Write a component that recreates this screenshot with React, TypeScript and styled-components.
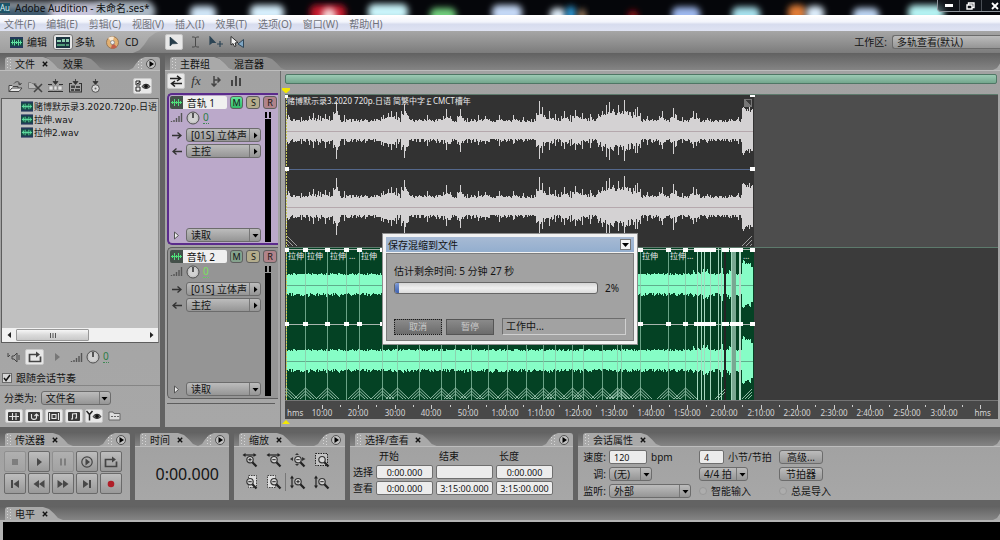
import React from 'react';
import styled, { createGlobalStyle, css } from 'styled-components';

const Global = createGlobalStyle`
  * { box-sizing: border-box; }
  html, body { margin: 0; padding: 0; background: #000; }
  body, button, input, select, table {
    font-family: "Noto Sans", "Noto Sans CJK SC", sans-serif;
    font-size: 10px;
    line-height: 12px;
    color: #141414;
  }
  button, input, select { margin: 0; padding: 0; border: 0; background: none; }
  svg { display: block; flex: none; }
`;

/* ---------- shell ---------- */

const Shell = styled.div`
  position: relative;
  display: flex;
  flex-direction: column;
  min-height: 100vh;
  overflow: hidden;
  background: #636363;
`;

const TitleBar = styled.header`
  position: relative;
  display: flex;
  align-items: center;
  height: 15px;
  overflow: hidden;
  background: #05060a;
`;

const Glow = styled.svg`
  position: absolute;
  inset: 0;
  width: 100%;
  height: 100%;
`;

const AppBadge = styled.span`
  position: relative;
  width: 10px;
  height: 10px;
  margin-right: 5px;
  background: #1d5468;
  color: #d8eef2;
  font-size: 8px;
  line-height: 10px;
`;

const WindowTitle = styled.h1`
  position: relative;
  flex: 1;
  margin: 0;
  font-size: 10px;
  line-height: 14px;
  font-weight: 400;
  color: #101010;
`;

const WindowButtons = styled.div`
  position: relative;
  align-self: flex-start;
  display: flex;
  height: 12px;
  border: 1px solid #8d949b;
  border-top: 0;
  border-right: 0;
  border-radius: 0 0 0 4px;
  background: rgba(20, 24, 30, 0.65);
`;

const WindowButton = styled.button`
  display: grid;
  place-items: center;
  width: 22px;
  height: 11px;
  border-right: 1px solid #4a4f55;
  &:last-child { width: 18px; border-right: 0; padding-left: 8px; }
`;

const MenuBar = styled.nav`
  display: flex;
  gap: 11px;
  height: 16px;
  padding-left: 4px;
  border-top: 1px solid #fff;
  background: linear-gradient(#ffffff, #f2f4fb 40%, #d7dcee 55%, #dfe3f3);
`;

const MenuItem = styled.button`
  color: #70727a;
  white-space: nowrap;
`;

const ModeBar = styled.div`
  display: flex;
  align-items: center;
  height: 22px;
  background: linear-gradient(#a6a6a6, #7c7c7c);
`;

const ModeGroup = styled.div`
  display: flex;
  align-items: center;
  gap: 6px;
  width: 162px;
  height: 22px;
  padding-left: 7px;
  background: linear-gradient(#b3b3b3, #9e9e9e);
  clip-path: polygon(0 0, 100% 0, 96% 8%, 92% 30%, 89% 62%, 86% 88%, 82% 100%, 0 100%);
`;

const ModeButton = styled.button`
  display: flex;
  align-items: center;
  gap: 2px;
  white-space: nowrap;
`;

const IconCell = styled.span<{ $on?: boolean; $w?: number }>`
  display: grid;
  place-items: center;
  width: ${p => p.$w ?? 18}px;
  height: 16px;
  border-radius: 3px;
  ${p => p.$on && css`
    border: 1px solid #757575;
    background: #e6e6e6;
  `}
`;

const ToolButton = styled.button<{ $on?: boolean; $w?: number; $h?: number }>`
  display: grid;
  place-items: center;
  width: ${p => p.$w ?? 18}px;
  height: ${p => p.$h ?? 16}px;
  border-radius: 2px;
  ${p => p.$on && css`
    border: 1px solid #c8c8c8;
    background: #e8e8e8;
  `}
`;

const ToolGroup = styled.div`
  display: flex;
  flex: 1;
  gap: 3px;
  padding-left: 3px;
`;

const WorkspacePicker = styled.label`
  display: flex;
  align-items: center;
  gap: 5px;
  white-space: nowrap;
`;

/* ---------- select ---------- */

const SelectFrame = styled.span<{ $w: number; $flush?: boolean }>`
  position: relative;
  display: block;
  flex: none;
  width: ${p => p.$w}px;
  height: 14px;
  border: 1px solid #6c6c6c;
  border-radius: 3px;
  background: linear-gradient(#bcbcbc, #959595);
  ${p => p.$flush && css`
    border-right: 0;
    border-radius: 3px 0 0 3px;
  `}
`;

const SelectControl = styled.select`
  appearance: none;
  display: block;
  width: 100%;
  height: 12px;
  padding-left: 4px;
  line-height: 12px;
`;

const SelectArrow = styled.span`
  position: absolute;
  top: 0;
  right: 0;
  display: grid;
  place-items: center;
  width: 11px;
  height: 12px;
  border-left: 1px solid #777;
  pointer-events: none;
`;

function Select(props: { label: string; value: string; w: number; side?: boolean; flush?: boolean; id?: string }) {
  return (
    <SelectFrame $w={props.w} $flush={props.flush}>
      <SelectControl id={props.id} aria-label={props.label} defaultValue={props.value}>
        <option>{props.value}</option>
      </SelectControl>
      {!props.flush && (
        <SelectArrow>
          <svg width="7" height="7" viewBox="0 0 7 7">
            <path d={props.side ? 'M2 0.5L5.5 3.5L2 6.5Z' : 'M0.5 2L6.5 2L3.5 5.5Z'} fill="#000" />
          </svg>
        </SelectArrow>
      )}
    </SelectFrame>
  );
}

/* ---------- panels ---------- */

const Panel = styled.section<{ $w?: number }>`
  display: flex;
  flex-direction: column;
  flex: ${p => (p.$w ? `0 0 ${p.$w}px` : '1 1 0')};
  min-width: 0;
`;

const TabRow = styled.div<{ $h?: number }>`
  display: flex;
  flex: none;
  align-items: flex-end;
  height: ${p => p.$h ?? 14}px;
  padding-left: 5px;
  background: linear-gradient(#616161, #848484);
`;

const Tab = styled.div<{ $wide?: boolean }>`
  display: flex;
  align-items: center;
  gap: 3px;
  height: 13px;
  padding: 0 ${p => (p.$wide ? 24 : 15)}px 0 2px;
  border-radius: 3px 0 0 0;
  background: #a9a9a9;
  clip-path: polygon(0 0, calc(100% - 20px) 0, calc(100% - 14px) 15%, calc(100% - 9px) 50%, calc(100% - 5px) 85%, 100% 100%, 0 100%);
  white-space: nowrap;
`;

const BackTab = styled(Tab)`
  margin-left: -18px;
  padding: 0 22px 0 18px;
  background: #8e8e8e;
  clip-path: polygon(0 0, calc(100% - 20px) 0, calc(100% - 14px) 15%, calc(100% - 9px) 50%, calc(100% - 5px) 85%, 100% 100%, 18px 100%, 13px 85%, 9px 50%, 4px 15%);
`;

const TabTitle = styled.button`
  line-height: 12px;
`;

const CloseTab = styled.button`
  display: grid;
  place-items: center;
  width: 7px;
  height: 10px;
  margin-left: 3px;
`;

const Corner = styled.div<{ $w?: number }>`
  display: flex;
  align-items: center;
  justify-content: flex-end;
  gap: 3px;
  flex: none;
  width: ${p => p.$w ?? 31}px;
  height: 13px;
  margin-left: auto;
  padding-right: 4px;
  border-radius: 0 3px 0 0;
  background: #a9a9a9;
  overflow: hidden;
  clip-path: polygon(0 100%, 4px 85%, 7px 50%, 11px 15%, 16px 0, 100% 0, 100% 100%);
`;

const RoundButton = styled.button`
  display: grid;
  place-items: center;
  width: 10px;
  height: 10px;
  border: 1px solid #555;
  border-radius: 50%;
  background: #c2c2c2;
`;

const PanelBody = styled.div`
  flex: 1;
  border-top: 1px solid #bdbdbd;
  background: linear-gradient(#a2a2a2, #a7a7a7);
`;

const Grip = () => (
  <svg width="5" height="11" viewBox="0 0 5 11" fill="#d6d6d6">
    {[0, 3, 6, 9].map(y => (
      <g key={y}>
        <rect x="0" y={y} width="1" height="1" />
        <rect x="3" y={y + 1} width="1" height="1" />
      </g>
    ))}
  </svg>
);

const Cross = () => (
  <svg width="6" height="6" viewBox="0 0 6 6">
    <path d="M0.8 0.8L5.2 5.2M5.2 0.8L0.8 5.2" stroke="#111" strokeWidth="1.4" />
  </svg>
);

function PanelTab({ title }: { title: string }) {
  return (
    <Tab>
      <Grip />
      <TabTitle>{title}</TabTitle>
      <CloseTab aria-label={`关闭${title}`}><Cross /></CloseTab>
    </Tab>
  );
}

function PanelCorner() {
  return (
    <Corner>
      <Grip />
      <RoundButton aria-label="面板菜单">
        <svg width="5" height="6" viewBox="0 0 5 6"><path d="M0.5 0L5 3L0.5 6Z" fill="#000" /></svg>
      </RoundButton>
    </Corner>
  );
}

/* ---------- workspace ---------- */

const Workspace = styled.main`
  display: flex;
  gap: 5px;
  height: 374px;
`;

const FileTools = styled.div`
  display: flex;
  align-items: center;
  gap: 2px;
  height: 27px;
  padding: 3px 8px 0 6px;
`;

const Push = styled.span`
  flex: 1;
`;

const FileBox = styled.div`
  display: flex;
  flex-direction: column;
  height: 245px;
  margin: 0 1px;
  border: 1px solid #5d5d5d;
  border-right-color: #888;
  background: #c0c0c0;
`;

const FileList = styled.ul`
  flex: 1;
  margin: 0;
  padding: 1px 0 0 19px;
  list-style: none;
  overflow: hidden;
`;

const FileItem = styled.li`
  display: flex;
  align-items: center;
  gap: 1px;
  height: 13px;
  font-family: "DejaVu Sans", "Noto Sans CJK SC", sans-serif;
  font-size: 9px;
  white-space: nowrap;
`;

const ScrollTrack = styled.div`
  display: flex;
  align-items: center;
  height: 14px;
  background: #f1f1f1;
`;

const ScrollEnd = styled.button`
  display: grid;
  place-items: center;
  width: 14px;
  height: 14px;
`;

const ScrollThumb = styled.div`
  display: grid;
  place-items: center;
  width: 73px;
  height: 12px;
  margin-right: auto;
  border: 1px solid #989898;
  border-radius: 1px;
  background: linear-gradient(#f6f6f6, #dadada 50%, #c9c9c9);
`;

const PreviewRow = styled.div`
  display: flex;
  align-items: center;
  gap: 3px;
  height: 28px;
  padding-left: 6px;
`;

const GreenValue = styled.span<{ $bright?: boolean }>`
  border-bottom: 1px dotted ${p => (p.$bright ? '#5fd25f' : '#3f8a55')};
  color: ${p => (p.$bright ? '#7be05f' : '#2f7d48')};
  line-height: 11px;
`;

const TempoCheck = styled.label`
  display: flex;
  align-items: center;
  gap: 4px;
  height: 14px;
  padding-left: 2px;
`;

const CheckFrame = styled.span`
  position: relative;
  display: block;
  width: 10px;
  height: 10px;
  svg { position: absolute; inset: 0; pointer-events: none; }
`;

const CheckBox = styled.input`
  appearance: none;
  display: block;
  width: 10px;
  height: 10px;
  border: 1px solid #6a6a6a;
  background: #d5d5d5;
`;

const SortRow = styled.div`
  display: flex;
  align-items: center;
  gap: 4px;
  height: 22px;
  padding: 3px 0 0 4px;
  border-top: 1px solid #858585;
  white-space: nowrap;
`;

const FilterRow = styled.div`
  display: flex;
  gap: 2px;
  padding: 2px 0 0 5px;
`;

const MainBody = styled(PanelBody)`
  display: flex;
`;

const TrackColumn = styled.div`
  display: flex;
  flex-direction: column;
  gap: 2px;
  width: 116px;
  padding-left: 2px;
  border-right: 1px solid #6d6d6d;
`;

const TrackTools = styled.div`
  display: flex;
  align-items: center;
  gap: 2px;
  height: 20px;
`;

const FxMark = styled.span`
  font-family: "Liberation Serif", serif;
  font-style: italic;
  font-size: 13px;
  line-height: 14px;
  color: #333;
`;

const TrackCard = styled.article<{ $active?: boolean }>`
  display: flex;
  flex-direction: column;
  height: 152px;
  margin-right: 2px;
  border: solid ${p => (p.$active ? '#5b2b8c' : '#5e5e5e')};
  border-width: ${p => (p.$active ? '2px 0 2px 2px' : '1px 0 1px 1px')};
  padding: ${p => (p.$active ? '0 1px 1px 1px' : '1px 1px 2px 2px')};
  border-radius: 5px 0 0 5px;
  background: ${p => (p.$active ? '#bba9ca' : '#959595')};
`;

const TrackHead = styled.div`
  display: flex;
  align-items: center;
  gap: 2px;
  height: 14px;
`;

const TrackName = styled.input`
  width: 44px;
  height: 13px;
  padding-left: 4px;
  border-radius: 0 2px 2px 0;
  background: #f0f0f0;
`;

const TrackBadge = styled.span`
  display: grid;
  place-items: center;
  width: 13px;
  height: 13px;
  margin-right: -2px;
  border-radius: 2px 0 0 2px;
  background: #44504a;
`;

const Flag = styled.button<{ $tone: string }>`
  width: 14px;
  height: 13px;
  margin-left: 1px;
  border: 1px solid #5f5f5f;
  border-radius: 3px;
  background: ${p => p.$tone};
  font-size: 9px;
  line-height: 11px;
`;

const TrackMain = styled.div`
  display: flex;
  flex: 1;
`;

const TrackControls = styled.div`
  display: flex;
  flex-direction: column;
  gap: 2px;
  width: 95px;
`;

const ControlRow = styled.div<{ $h?: number }>`
  display: flex;
  align-items: center;
  gap: 3px;
  height: ${p => p.$h ?? 14}px;
  &:last-child { margin-top: auto; }
`;

const Glyph = styled.span`
  display: grid;
  place-items: center;
  width: 13px;
  height: 13px;
`;

const Meter = styled.div`
  display: flex;
  flex-direction: column;
  gap: 1px;
  width: 6px;
  margin-top: 3px;
`;

const MeterClip = styled.span`
  display: flex;
  justify-content: space-between;
  height: 6px;
  &::before, &::after { content: ""; width: 2px; background: #000; }
`;

const MeterBar = styled.span`
  flex: 1;
  background: #000;
`;

const ColumnRule = styled.hr`
  width: 108px;
  margin: 2px 0 0;
  border: 0;
  border-top: 1px solid #5e5e5e;
`;

const WaveColumn = styled.div`
  display: flex;
  flex-direction: column;
  flex: 1;
  min-width: 0;
  padding: 3px 2px 0 4px;
`;

const RangeBar = styled.div`
  height: 10px;
  margin: 0 1px 0 0;
  border: 1px solid #4f7765;
  border-radius: 2px;
  background: linear-gradient(#9ccab4, #73a68d);
`;

const Cursor = styled.div<{ $foot?: boolean }>`
  height: ${p => (p.$foot ? 5 : 10)}px;
  padding-top: ${p => (p.$foot ? 1 : 4)}px;
  svg { margin-left: -3px; }
`;

const Lane = styled.div<{ $tone: string }>`
  height: 153px;
  border-top: 1px solid #5d7a6c;
  background: ${p => p.$tone};
  overflow: hidden;
`;

const Ruler = styled.div`
  height: 19px;
  border-top: 1px solid #757575;
  background: #484848;
  overflow: hidden;
`;

/* ---------- waveforms ---------- */

const CLIP = 468;

function makeRandom(seed: number) {
  let s = seed;
  return () => {
    s = (s * 1664525 + 1013904223) % 4294967296;
    return s / 4294967296;
  };
}

const PEAKS: Array<[number, number]> = [
  [1, 22], [28, 18], [33, 16], [40, 17], [44, 15], [50, 18], [51, 29], [98, 16], [103, 18], [106, 20], [111, 19],
  [119, 27], [120, 20], [142, 16], [161, 22], [175, 22], [200, 15], [214, 16], [254, 26], [257, 24], [264, 20], [270, 17],
  [279, 20], [290, 21], [297, 18], [305, 17], [317, 20], [321, 26], [324, 29], [328, 22], [333, 26], [339, 31],
  [345, 19], [352, 24], [377, 20], [388, 23], [397, 14], [408, 20], [411, 18], [422, 13],
];

function voiceAmplitude(x: number, r: () => number) {
  let a = 9 + r() * 3;
  for (const [px, h] of PEAKS) {
    const d = Math.abs(px - x);
    if (d === 0) a = Math.max(a, h);
    else if (d < 4) a = Math.max(a, h * 0.55 + r() * 4);
  }
  if (x > 310 && x < 356) a = Math.max(a, 11 + r() * 8);
  if (r() > 0.95) a += 4;
  if (x > 456) a = 17 + r() * 8;
  return Math.round(a);
}

function musicAmplitude(x: number, r: () => number) {
  let a = 10 + r() * 2;
  if (x > 405 && x < 450 && r() > 0.5) a += r() * 6;
  if (x > 456) a = 18 + r() * 7;
  return Math.round(a);
}

function wavePath(center: number, seed: number, amp: (x: number, r: () => number) => number) {
  const r = makeRandom(seed);
  let d = '';
  for (let x = 1; x < CLIP; x += 1) {
    const up = amp(x, r);
    const down = Math.max(8, up - Math.round(r() * 3));
    d += `M${x + 0.5} ${center - up}V${center + down}`;
  }
  return d;
}

const VOICE = [wavePath(36, 7, voiceAmplitude), wavePath(112, 7, voiceAmplitude)];
const MUSIC = [wavePath(37, 21, musicAmplitude), wavePath(113, 21, musicAmplitude)];

const CUTS = [1, 20, 42, 61, 74, 97, 112, 134, 156, 170, 186, 203, 222, 241, 258, 270, 287, 298, 317, 332, 336, 355, 383, 400];
const THIN_CUTS = [412, 416, 419, 425, 433, 436, 446];
const HANDLES: Array<[number, number]> = [
  ...CUTS.map(x => [x - 2, 5] as [number, number]),
  [409, 22], [437, 7], [445, 13], [465, 5],
];

const ClipText = styled.text`
  font-size: 8px;
  fill: #e9e9e9;
`;

function VoiceClip() {
  return (
    <svg width={CLIP + 2} height="152" viewBox={`0 0 ${CLIP + 2} 152`} shapeRendering="crispEdges" role="img" aria-label="音轨 1 波形">
      <rect x="1" width={CLIP} height="152" fill="#323232" />
      {VOICE.map((d, i) => <path key={i} d={d} stroke="#d4d2d3" strokeWidth="1" />)}
      <path d={`M1 36.5H${CLIP}M1 112.5H${CLIP}`} stroke="#b5a8ad" />
      <path d={`M1 74.5H${CLIP}`} stroke="#54688c" />
      <path d="M1.5 0V152" stroke="#c9c95a" strokeDasharray="2 1" />
      <g fill="#fff">
        <rect x="0" y="0" width="3" height="3" /><rect x="0" y="72" width="4" height="4" />
        <rect x={CLIP - 3} y="0" width="5" height="2" /><rect x={CLIP - 3} y="72" width="5" height="4" />
      </g>
      <rect x="459" y="4" width="8" height="8" fill="#777" />
      <path d="M460 5L466 11V5Z" fill="#3c3c3c" />
      <g shapeRendering="auto" stroke="#bdbdbd" strokeWidth="0.8">
        <path d="M2 141L12 151M2 145L8 151M2 149L4 151" />
        <path d="M467 141L457 151M467 145L461 151M467 149L465 151" />
      </g>
      <ClipText x="2" y="9">赌博默示录3.2020 720p.日语 简繁中字￡CMCT槽年</ClipText>
    </svg>
  );
}

function MusicClip() {
  const labels: Array<[number, string]> = [
    [3, '拉伸'], [22, '拉伸'], [45, '拉伸'], [64, '…'], [76, '拉伸'], [357, '拉伸'], [385, '拉伸'], [402, '…'], [458, '…'],
  ];
  const folds = CUTS.filter(x => x !== 61);
  return (
    <svg width={CLIP + 2} height="152" viewBox={`0 0 ${CLIP + 2} 152`} shapeRendering="crispEdges" role="img" aria-label="音轨 2 波形">
      <rect x="1" width={CLIP} height="152" fill="#044224" />
      {MUSIC.map((d, i) => <path key={i} d={d} stroke="#86fdc6" strokeWidth="1" />)}
      <path d={`M1 37.5H${CLIP}M1 113.5H${CLIP}`} stroke="#5fae8c" />
      <path d={`M1 76.5H${CLIP}M1 1.5H${CLIP}`} stroke="#a9b5ae" />
      <path d={CUTS.map(x => `M${x + 0.5} 0V152`).join('')} stroke="#8ec4a8" opacity="0.75" />
      <path d={THIN_CUTS.map(x => `M${x + 0.5} 0V152`).join('')} stroke="#a6d8bf" />
      <rect x="447" y="0" width="4" height="152" fill="#78a892" />
      <rect x="439" y="0" width="2" height="152" fill="#242424" />
      <rect x="454" y="0" width="2" height="152" fill="#b5dcc8" />
      <path d="M1.5 0V152" stroke="#c9c95a" strokeDasharray="2 1" />
      <g shapeRendering="auto" stroke="#a3c9b5" strokeWidth="0.9" fill="none">
        {folds.map(x => (
          <path key={x} d={`M${x - 11} 151L${x + 0.5} 140L${x + 12} 151M${x - 8} 151L${x + 0.5} 143L${x + 9} 151M${x - 5} 151L${x + 0.5} 146L${x + 6} 151`} />
        ))}
        <path d="M430 151L440 141M433 151L440 144M457 151L467 141M460 151L467 144M463 151L467 147" />
      </g>
      <g fill="#fff">
        {HANDLES.map(([x, w]) => <rect key={`a${x}`} x={x} y="0" width={w} height="4" />)}
        {HANDLES.map(([x, w]) => <rect key={`b${x}`} x={x} y="74" width={w} height="4" />)}
      </g>
      {labels.map(([x, t]) => <ClipText key={x} x={x} y="11">{t}</ClipText>)}
    </svg>
  );
}

const RulerText = styled.text`
  font-size: 8px;
  fill: #d6d6d6;
`;

function TimeRuler() {
  const step = 439 / 12;
  const ticks = Array.from({ length: 19 }, (_, i) => i + 1);
  const label = (i: number) => {
    const h = Math.floor(i / 6);
    const m = `${(i % 6) * 10}`.padStart(2, '0');
    return h ? `${h}:${m}:00` : `${m}:00`;
  };
  return (
    <svg width="100%" height="18">
      <path d={ticks.map(i => `M${Math.round(step * i)}.5 4V8M${Math.round(step * (i + 0.5))}.5 4V6`).join('')} stroke="#cfcfcf" />
      <RulerText x="2" y="15">hms</RulerText>
      {ticks.slice(0, 18).map(i => (
        <RulerText key={i} x={Math.round(step * i)} y="15" textAnchor="middle">{label(i)}</RulerText>
      ))}
      <RulerText x="99%" y="15" textAnchor="end">hms</RulerText>
    </svg>
  );
}

/* ---------- icons ---------- */

const WaveIcon = ({ w = 13 }: { w?: number }) => (
  <svg width={w} height="11" viewBox="0 0 13 11">
    <rect width="13" height="11" fill="#24385a" />
    <rect y="2" width="13" height="7" fill="#154a45" />
    <path d="M1 5.5H2.5V3.5V7.5M4.5 2.5V8.5M6.5 4V7M8.5 2.5V8.5M10.5 3.5V7.5M1 5.5H12" stroke="#5fe0a0" fill="none" />
  </svg>
);

const MultiIcon = () => (
  <svg width="14" height="11" viewBox="0 0 14 11">
    <rect width="14" height="11" fill="#1c3440" />
    <path d="M1 3H5V5H1ZM6 2H9V5H6ZM10 2H13V5H10Z" fill="#8fd0b0" />
    <path d="M1 7H9V9H1ZM10 7H13V9H10Z" fill="#4f9a78" />
  </svg>
);

const DiscIcon = () => (
  <svg width="13" height="13" viewBox="0 0 13 13">
    <circle cx="6.5" cy="6.5" r="6" fill="#e2b071" stroke="#8a6a4a" strokeWidth="0.8" />
    <path d="M6.5 6.5L2 2A6 6 0 0 1 8 0.8Z" fill="#f7e6d0" />
    <path d="M6.5 6.5L11 11A6 6 0 0 1 5 12.2Z" fill="#c45f4a" />
    <circle cx="6.5" cy="6.5" r="2" fill="#eee" stroke="#777" strokeWidth="0.7" />
  </svg>
);

const Stroke = ({ d, w = 13, h = 13, c = '#444', s = 1.3, fill = 'none' }: { d: string; w?: number; h?: number; c?: string; s?: number; fill?: string }) => (
  <svg width={w} height={h} viewBox={`0 0 ${w} ${h}`}>
    <path d={d} stroke={c} strokeWidth={s} fill={fill} />
  </svg>
);

const Volume = () => (
  <svg width="13" height="11" viewBox="0 0 13 11">
    <path d="M1.5 10V9M4 10V8M6.5 10V6M9 10V4M11.5 10V1" stroke="#555" strokeWidth="1.4" />
  </svg>
);

const Knob = () => (
  <svg width="14" height="14" viewBox="0 0 14 14">
    <circle cx="7" cy="7" r="6" fill="#c4c4c4" stroke="#4e4e4e" />
    <circle cx="7" cy="7" r="4" fill="#d2d2d2" />
    <path d="M7 2V7" stroke="#222" strokeWidth="1.4" />
  </svg>
);

const Folder = () => (
  <svg width="15" height="13" viewBox="0 0 15 13">
    <path d="M1 11.5V5.5H4L5 6.5H10V8M1 11.5L4 8H14L11 11.5Z" fill="#e6e6e6" stroke="#444" />
    <path d="M6 3.5C8 1 11 1 12 4M10 3.5L12 5L13.5 3" stroke="#444" fill="none" />
  </svg>
);

const RemoveFile = () => (
  <svg width="15" height="13" viewBox="0 0 15 13">
    <path d="M0.5 8.5V2.5H3L4 3.5H8V8.5Z" fill="#b8b8b8" stroke="#7c7c7c" />
    <path d="M6 4L14 12M14 4L6 12" stroke="#444" strokeWidth="1.6" />
  </svg>
);

const Insert = ({ kind }: { kind: 'wave' | 'multi' | 'disc' }) => (
  <svg width="15" height="14" viewBox="0 0 15 14">
    <path d="M7.5 0V3M5 2.5L7.5 5.5L10 2.5Z" stroke="#333" fill="#333" strokeWidth="0.8" />
    {kind === 'disc' && (
      <>
        <circle cx="7.5" cy="9.5" r="3.8" fill="#dadada" stroke="#555" />
        <circle cx="7.5" cy="9.5" r="1" fill="#666" />
      </>
    )}
    {kind === 'wave' && (
      <>
        <path d="M0 5.5H4M11 5.5H15M0 12.5H15" stroke="#333" />
        <path d="M1 7H5V11H1ZM6 7H9V11H6ZM10 7H14V11H10Z" fill="#e0e0e0" stroke="#777" strokeWidth="0.5" />
      </>
    )}
    {kind === 'multi' && (
      <>
        <path d="M1 4.5H4M11 4.5H14M1.5 5V13M13.5 5V13M1 13H14" stroke="#333" />
        <path d="M3 6.5H7V9H3ZM8 7H12V9H8ZM3 10H6V12H3ZM7 10H12V12H7Z" fill="#444" />
      </>
    )}
  </svg>
);

const Eye = ({ list }: { list?: boolean }) => (
  <svg width="16" height="12" viewBox="0 0 16 12">
    {list ? (
      <path d="M1 1H5V5H1ZM1 7H5V11H1ZM2 3L3 4L5 1" stroke="#222" fill="none" />
    ) : (
      <path d="M0.5 1L3.5 4.5L6.5 1M3.5 4.5V10.5" stroke="#222" fill="none" strokeWidth="1.5" />
    )}
    <path d="M7 6.5C9 3.5 13 3.5 15 6.5C13 9 9 9 7 6.5Z" fill="#777" stroke="#222" />
    <circle cx="11" cy="6.3" r="1.8" fill="#111" />
  </svg>
);

const FilterGlyph = ({ d }: { d: string }) => (
  <svg width="12" height="9" viewBox="0 0 12 9">
    <rect width="12" height="9" rx="1" fill="#3a3a3a" />
    <path d={d} stroke="#e4e4e4" strokeWidth="1.1" fill="none" />
  </svg>
);

const Magnifier = ({ kind }: { kind: string }) => (
  <svg width="16" height="15" viewBox="0 0 16 15">
    {kind.startsWith('h') && (
      <>
        <path d="M2 2H13" stroke="#222" strokeWidth="1.2" />
        <path d="M0.5 2L3.5 0V4ZM14.5 2L11.5 0V4Z" fill="#222" />
      </>
    )}
    {kind.startsWith('v') && (
      <>
        <path d="M2 2V12" stroke="#222" strokeWidth="1.2" />
        <path d="M2 0.5L0 3.5H4ZM2 13.5L0 10.5H4Z" fill="#222" />
      </>
    )}
    {kind === 'all' && <path d="M0 6L3 4V8ZM15.5 6L12 4V8ZM7 0L5 2H9ZM7 13L5 11H9Z" fill="#333" />}
    {kind === 'sel' && <rect x="1.5" y="0.5" width="12" height="12" fill="#c4c4c4" stroke="#222" strokeDasharray="1.5 1" />}
    {(kind === 'left' || kind === 'right') && (
      <rect x={kind === 'left' ? 6.5 : 1.5} y="0.5" width="8" height="12" fill="#dedede" stroke="#444" strokeDasharray="1.5 1" />
    )}
    <circle cx="8" cy="6.7" r="3.2" fill="#d4d4d4" stroke="#333" strokeWidth="1.2" />
    <path d="M10.4 9.2L14.5 13.5" stroke="#222" strokeWidth="2.2" />
    {kind !== 'sel' && <path d="M6.3 6.7H9.7" stroke="#222" />}
    {(kind === 'h+' || kind === 'v+') && <path d="M8 5V8.4" stroke="#222" />}
  </svg>
);

/* ---------- bottom dock ---------- */

const Dock = styled.div`
  display: flex;
  gap: 5px;
  height: 68px;
  margin-top: 5px;
`;

const ButtonGrid = styled.div`
  display: grid;
  grid-template-columns: repeat(5, 22px);
  gap: 1px 2px;
  padding: 4px 4px 0;
`;

const TransportButton = styled.button<{ $dim?: boolean }>`
  display: grid;
  place-items: center;
  height: 21px;
  border: 1px solid ${p => (p.$dim ? '#909090' : '#6a6a6a')};
  border-radius: 2px;
  background: ${p => (p.$dim ? 'linear-gradient(#b0b0b0, #a2a2a2)' : 'linear-gradient(#bdbdbd, #999)')};
`;

const BigTime = styled.output`
  display: block;
  padding: 16px 10px 0 0;
  text-align: right;
  font-size: 16px;
  line-height: 22px;
`;

const ZoomGrid = styled.div`
  display: grid;
  grid-template-columns: repeat(4, 24px);
  grid-auto-rows: 18px;
  gap: 4px 0;
  padding: 4px 0 0 3px;
`;

const ZoomButton = styled.button<{ $ruled?: boolean }>`
  display: grid;
  place-items: center;
  border-left: 1px solid ${p => (p.$ruled ? '#777' : 'transparent')};
`;

const TimeTable = styled.table`
  border-spacing: 3px 2px;
  margin: 0;
  th { padding: 0; font-weight: 400; text-align: left; line-height: 14px; white-space: nowrap; }
  thead th { padding-left: 3px; }
  td { padding: 0; }
`;

const Field = styled.input<{ $w: number; $center?: boolean }>`
  display: block;
  width: ${p => p.$w}px;
  height: 14px;
  padding: 0 ${p => (p.$center ? 1 : 4)}px;
  border: 1px solid #6f6f6f;
  border-radius: 2px;
  background: #ececec;
  font-size: 9px;
  line-height: 12px;
  text-align: ${p => (p.$center ? 'center' : 'left')};
`;

const SessionGrid = styled.div`
  display: grid;
  grid-template-columns: 25px 87px 77px auto;
  grid-template-rows: repeat(3, 14px);
  column-gap: 3px;
  row-gap: 3px;
  justify-content: start;
  align-items: center;
  padding: 3px 0 0 3px;
  white-space: nowrap;
`;

const SessionLabel = styled.label`
  text-align: right;
`;

const Inline = styled.span`
  display: flex;
  align-items: center;
  gap: 4px;
`;

const PushButton = styled.button`
  width: 44px;
  height: 14px;
  border: 1px solid #6c6c6c;
  border-radius: 3px;
  background: linear-gradient(#bcbcbc, #979797);
`;

const RadioLabel = styled.label`
  display: flex;
  align-items: center;
  gap: 4px;
`;

const Radio = styled.input`
  appearance: none;
  width: 8px;
  height: 8px;
  border: 1px solid #999;
  border-radius: 50%;
  background: #adadad;
`;

const LevelPanel = styled.section`
  display: flex;
  flex-direction: column;
  flex: 1;
  padding-top: 6px;
`;

const LevelBody = styled.div`
  flex: 1;
  min-height: 18px;
  border: solid #b4b4b4;
  border-width: 2px 0 0 3px;
  background: #000;
`;

/* ---------- dialog ---------- */

const Dialog = styled.div`
  position: absolute;
  left: 382px;
  top: 233px;
  width: 256px;
  padding: 3px;
  border: 1px solid #8e8e8e;
  background: #f2f2f2;
`;

const DialogTitle = styled.div`
  display: flex;
  align-items: center;
  justify-content: space-between;
  height: 15px;
  padding: 0 3px 0 2px;
  background: linear-gradient(#a7bad4, #93aece);
`;

const DialogClose = styled.button`
  display: grid;
  place-items: center;
  width: 11px;
  height: 11px;
  border: 1px solid #777;
  background: #f5f5f5;
`;

const DialogBody = styled.div`
  display: grid;
  gap: 3px;
  height: 88px;
  margin-top: 1px;
  padding: 11px 7px 5px 7px;
  border: 1px solid #7d7d7d;
  background: #a2a2a2;
  align-content: space-between;
`;

const ProgressRow = styled.div`
  display: flex;
  align-items: center;
  gap: 7px;
`;

const ProgressTrack = styled.div`
  width: 204px;
  height: 12px;
  border: 1px solid #666;
  border-radius: 3px;
  background: linear-gradient(#d4d4d4, #efefef 50%, #dcdcdc);
  overflow: hidden;
`;

const ProgressFill = styled.div`
  height: 10px;
  background: linear-gradient(#7f9cd8, #3f62b0);
`;

const DialogActions = styled.div`
  display: flex;
  gap: 4px;
  margin-top: 20px;
`;

const DialogButton = styled.button<{ $focus?: boolean }>`
  width: 48px;
  height: 16px;
  margin-top: 1px;
  border: 1px ${p => (p.$focus ? 'dotted #1c1c1c' : 'solid #555')};
  background: linear-gradient(#8a8a8a, #6c6c6c);
  color: #c9c9c9;
  font-size: 9px;
`;

const StatusBox = styled.div`
  flex: 1;
  height: 17px;
  margin-left: 4px;
  padding-left: 3px;
  border: 1px solid #6d6d6d;
  border-right-color: #d0d0d0;
  border-bottom-color: #d0d0d0;
  line-height: 15px;
`;

function SaveDialog() {
  const progress = 2;
  return (
    <Dialog role="dialog" aria-label="保存混缩到文件">
      <DialogTitle>
        <span>保存混缩到文件</span>
        <DialogClose aria-label="菜单">
          <svg width="7" height="4" viewBox="0 0 7 4"><path d="M0 0H7L3.5 4Z" fill="#000" /></svg>
        </DialogClose>
      </DialogTitle>
      <DialogBody>
        <div>估计剩余时间: 5 分钟 27 秒</div>
        <ProgressRow>
          <ProgressTrack role="progressbar" aria-valuenow={progress}>
            <ProgressFill style={{ width: `${progress}%` }} />
          </ProgressTrack>
          <span>{progress}%</span>
        </ProgressRow>
        <DialogActions>
          <DialogButton $focus>取消</DialogButton>
          <DialogButton>暂停</DialogButton>
          <StatusBox>工作中...</StatusBox>
        </DialogActions>
      </DialogBody>
    </Dialog>
  );
}

/* ---------- tracks ---------- */

function Track({ name, active }: { name: string; active?: boolean }) {
  return (
    <TrackCard $active={active}>
      <TrackHead>
        <TrackBadge><Stroke w={11} h={9} c="#4fe07a" s={1} d="M0 4.5H11M1.5 3V6M3.5 1V8M5.5 3V6M7.5 1V8M9.5 3V6" /></TrackBadge>
        <TrackName aria-label="音轨名称" defaultValue={name} />
        <Flag $tone={active ? 'linear-gradient(#5fe79a, #35b968)' : '#85a28d'}>M</Flag>
        <Flag $tone="#b3ac8c">S</Flag>
        <Flag $tone="#b0838a">R</Flag>
      </TrackHead>
      <TrackMain>
        <TrackControls>
          <ControlRow $h={17}><Glyph><Volume /></Glyph><Knob /><GreenValue $bright={!active}>0</GreenValue></ControlRow>
          <ControlRow>
            <Glyph><Stroke w={10} h={9} c="#333" s={1.4} d="M0 4.5H9M5.5 1.5L9 4.5L5.5 7.5" /></Glyph>
            <Select label="输入" value="[01S] 立体声" w={75} side />
          </ControlRow>
          <ControlRow>
            <Glyph><Stroke w={10} h={9} c="#333" s={1.4} d="M10 4.5H1M4.5 1.5L1 4.5L4.5 7.5" /></Glyph>
            <Select label="输出" value="主控" w={75} side />
          </ControlRow>
          <ControlRow>
            <Glyph><Stroke w={7} h={9} c="#555" s={1} fill="#eee" d="M1.5 1L5.5 4.5L1.5 8Z" /></Glyph>
            <Select label="自动化模式" value="读取" w={75} />
          </ControlRow>
        </TrackControls>
        <Meter><MeterClip /><MeterBar /></Meter>
      </TrackMain>
    </TrackCard>
  );
}

const GLOWS: Array<[number, number, number, string]> = [
  [0, 50, 8, '#3c5a70'], [50, 60, 5, '#c9c6dc'], [95, 60, 4, '#aab8c4'], [190, 26, 6, '#cfe4f6'], [250, 34, 5, '#d6eefc'],
  [310, 36, 5, '#c4182a'], [322, 14, 8, '#f4d4d6'], [368, 40, 4, '#c9f4fa'], [430, 26, 8, '#6fce7c'],
  [492, 30, 5, '#c4d8f6'], [550, 16, 8, '#dceaf6'], [566, 10, 6, '#2e9ad6'], [578, 8, 9, '#a08060'],
  [628, 10, 10, '#8c1018'], [672, 28, 7, '#9db8ee'], [732, 28, 7, '#a6e0ec'], [788, 18, 5, '#e07c34'],
  [806, 18, 6, '#dcecfa'], [853, 26, 8, '#bcd4f2'], [908, 36, 5, '#b4f2f2'],
];

const MENUS = ['文件(F)', '编辑(E)', '剪辑(C)', '视图(V)', '插入(I)', '效果(T)', '选项(O)', '窗口(W)', '帮助(H)'];
const FILES = ['赌博默示录3.2020.720p.日语', '拉伸.wav', '拉伸2.wav'];

const TRANSPORT: Array<[string, string, boolean?]> = [
  ['停止', 'M4 4H10V10H4Z', true],
  ['播放', 'M5 3L10 7L5 11Z'],
  ['暂停', 'M4 3.5H6V10.5H4ZM8 3.5H10V10.5H8Z', true],
  ['从光标播放', ''],
  ['循环', ''],
  ['到开头', 'M3 3H5V11H3ZM11 3V11L5.5 7Z'],
  ['快退', 'M7 3V11L1.5 7ZM12.5 3V11L7 7Z'],
  ['快进', 'M1.5 3V11L7 7ZM7 3V11L12.5 7Z'],
  ['到结尾', 'M9 3H11V11H9ZM3 3V11L8.5 7Z'],
  ['录音', 'rec'],
];

const LoopIcon = () => (
  <svg width="14" height="14" viewBox="0 0 14 14">
    <path d="M5 4.5H1.5V11.5H12.5V6.5M5 4.5H9" stroke="#444" strokeWidth="1.7" fill="none" />
    <path d="M8 1.5L12 4.5L8 7.5Z" fill="#444" />
  </svg>
);

function TransportGlyph({ d, name }: { d: string; name: string }) {
  if (name === '循环') return <LoopIcon />;
  return (
    <svg width="14" height="14" viewBox="0 0 14 14">
      {name === '从光标播放' && (
        <>
          <circle cx="7" cy="7" r="5.2" fill="none" stroke="#444" strokeWidth="1.2" />
          <path d="M5.5 3.5L10 7L5.5 10.5Z" fill="#444" />
        </>
      )}
      {d === 'rec' ? <circle cx="7" cy="7" r="3.3" fill="#b01e28" /> : <path d={d} fill={name === '停止' || name === '暂停' ? '#7e7e7e' : '#484848'} />}
    </svg>
  );
}

export default function App() {
  return (
    <Shell>
      <Global />
      <TitleBar>
        <Glow viewBox="0 0 1000 15" preserveAspectRatio="none" aria-hidden="true">
          <defs><filter id="soft" x="-50%" y="-100%" width="200%" height="300%"><feGaussianBlur stdDeviation="3" /></filter></defs>
          <rect x="-10" y="1" width="160" height="14" fill="#90959c" filter="url(#soft)" />
          {GLOWS.map(([x, w, y, c]) => <rect key={x} x={x} y={y} width={w} height="16" rx="6" fill={c} filter="url(#soft)" />)}
        </Glow>
        <AppBadge>Au</AppBadge>
        <WindowTitle>Adobe Audition - 未命名.ses*</WindowTitle>
        <WindowButtons>
          <WindowButton aria-label="最小化"><svg width="8" height="3"><rect width="8" height="3" fill="#fff" /></svg></WindowButton>
          <WindowButton aria-label="还原"><Stroke w={9} h={8} c="#fff" s={1.4} d="M2.5 2.5V1H8V5.5H6.5M1 3H6V7H1Z" /></WindowButton>
          <WindowButton aria-label="关闭"><Stroke w={8} h={8} c="#fff" s={1.8} d="M1 1L7 7M7 1L1 7" /></WindowButton>
        </WindowButtons>
      </TitleBar>
      <MenuBar>
        {MENUS.map(m => <MenuItem key={m}>{m}</MenuItem>)}
      </MenuBar>
      <ModeBar>
        <ModeGroup>
          <ModeButton><IconCell><WaveIcon /></IconCell>编辑</ModeButton>
          <ModeButton><IconCell $on $w={20}><MultiIcon /></IconCell>多轨</ModeButton>
          <ModeButton><IconCell $w={22}><DiscIcon /></IconCell>CD</ModeButton>
        </ModeGroup>
        <ToolGroup>
          <ToolButton $on aria-label="混合工具"><Stroke w={10} h={10} c="#1e3340" s={0.6} fill="#263c4a" d="M1 0V9L3.5 6.8L8.5 6.5Z" /></ToolButton>
          <ToolButton aria-label="时间选择工具"><Stroke w={9} h={12} c="#4a4a4a" s={1} d="M1 1H3.5L4.5 2L5.5 1H8M4.5 2V10M1 11H3.5L4.5 10L5.5 11H8" /></ToolButton>
          <ToolButton aria-label="移动工具"><Stroke w={15} h={12} c="#2c4454" s={1.2} fill="#2c4454" d="M1 1V8L3 6.5L6 6.5ZM11 5V11M8 8H14" /></ToolButton>
          <ToolButton aria-label="刷选工具">
            <svg width="15" height="12" viewBox="0 0 15 12">
              <path d="M8 8L13.5 3.5V11.5Z" fill="#7fa6c4" stroke="#2f4658" />
              <path d="M1 0.5V9L3 7.5L4.5 10.5L6 10L5 7L8 6.5Z" fill="#f2f2f2" stroke="#222" strokeWidth="0.9" />
            </svg>
          </ToolButton>
        </ToolGroup>
        <WorkspacePicker>工作区: <Select label="工作区" value="多轨查看(默认)" w={108} flush /></WorkspacePicker>
      </ModeBar>

      <Workspace>
        <Panel $w={160}>
          <TabRow $h={17}>
            <PanelTab title="文件" />
            <BackTab><TabTitle>效果</TabTitle></BackTab>
            <PanelCorner />
          </TabRow>
          <PanelBody>
            <FileTools>
              <ToolButton aria-label="导入文件"><Folder /></ToolButton>
              <ToolButton aria-label="关闭文件"><RemoveFile /></ToolButton>
              <ToolButton aria-label="插入多轨"><Insert kind="wave" /></ToolButton>
              <ToolButton aria-label="编辑文件"><Insert kind="multi" /></ToolButton>
              <ToolButton aria-label="插入 CD"><Insert kind="disc" /></ToolButton>
              <Push />
              <ToolButton $on $w={19} aria-label="高级选项"><Eye list /></ToolButton>
            </FileTools>
            <FileBox>
              <FileList>
                {FILES.map(f => <FileItem key={f}><WaveIcon w={12} />{f}</FileItem>)}
              </FileList>
              <ScrollTrack>
                <ScrollEnd aria-label="向左"><Stroke w={5} h={6} c="none" fill="#222" d="M4 0V6L0.5 3Z" /></ScrollEnd>
                <ScrollThumb><Stroke w={6} h={5} c="#555" s={1} d="M0.5 0V5M3 0V5M5.5 0V5" /></ScrollThumb>
                <ScrollEnd aria-label="向右"><Stroke w={5} h={6} c="none" fill="#222" d="M1 0V6L4.5 3Z" /></ScrollEnd>
              </ScrollTrack>
            </FileBox>
            <PreviewRow>
              <ToolButton $w={16} aria-label="自动播放"><Stroke w={14} h={11} c="#444" s={1} d="M1 1V5L3 3M5 4H7L10 1V10L7 7H5ZM12 3V8" /></ToolButton>
              <ToolButton $on $w={19} aria-label="循环"><LoopIcon /></ToolButton>
              <ToolButton $w={20} aria-label="播放"><Stroke w={6} h={8} c="none" fill="#777" d="M1 0L6 4L1 8Z" /></ToolButton>
              <Volume /><Knob /><GreenValue>0</GreenValue>
            </PreviewRow>
            <TempoCheck>
              <CheckFrame>
                <CheckBox type="checkbox" defaultChecked />
                <Stroke w={10} h={10} c="#111" s={1.5} d="M2 5L4 7.5L8 2" />
              </CheckFrame>
              跟随会话节奏
            </TempoCheck>
            <SortRow><label htmlFor="sort">分类为:</label><Select id="sort" label="分类为" value="文件名" w={70} /></SortRow>
            <FilterRow>
              <ToolButton $on $h={14} aria-label="音频"><FilterGlyph d="M4.5 1V8M8 1V8M1 4.5H11" /></ToolButton>
              <ToolButton $on $h={14} aria-label="循环文件"><FilterGlyph d="M3.5 2V5.5C3.5 8 8.5 8 8.5 5.5V3M6.5 4L8.5 2L10.5 4" /></ToolButton>
              <ToolButton $on $h={14} aria-label="视频"><FilterGlyph d="M4 2.5H8V6.5H4ZM1.5 1V8M10.5 1V8" /></ToolButton>
              <ToolButton $on $h={14} aria-label="MIDI"><FilterGlyph d="M4.5 7V2L8.5 1.5V6M3 7H5M7 6H9" /></ToolButton>
              <ToolButton $on $h={14} aria-label="筛选"><Eye /></ToolButton>
              <ToolButton $h={14} aria-label="完整路径"><Stroke w={13} h={10} c="#666" s={1} fill="#dcdcdc" d="M1 9V1H5L6 2.5H12V9ZM3 5.5H5M6 5.5H8M9 5.5H11" /></ToolButton>
            </FilterRow>
          </PanelBody>
        </Panel>

        <Panel>
          <TabRow $h={17}>
            <Tab $wide><Grip /><TabTitle>主群组</TabTitle></Tab>
            <BackTab><TabTitle>混音器</TabTitle></BackTab>
            <Corner $w={7} />
          </TabRow>
          <MainBody>
            <TrackColumn>
              <TrackTools>
                <ToolButton $on aria-label="输入/输出"><Stroke w={12} h={12} c="#222" s={1.5} d="M0 3.5H10M7 0.8L10.5 3.5L7 6M12 8.5H2M5 6L1.5 8.5L5 11.5" /></ToolButton>
                <ToolButton aria-label="效果"><FxMark>fx</FxMark></ToolButton>
                <ToolButton aria-label="发送"><Stroke w={10} h={11} c="#444" s={1.5} d="M3 0V10M0.5 7.5L3 10L5.5 7.5M3 4H9M6.5 1.5L9 4L6.5 6.5" /></ToolButton>
                <ToolButton aria-label="均衡器">
                  <svg width="10" height="10" viewBox="0 0 10 10"><path d="M0 4H2V10H0ZM4 0H6V10H4ZM8 2H10V10H8Z" fill="#444" /></svg>
                </ToolButton>
              </TrackTools>
              <Track name="音轨 1" active />
              <Track name="音轨 2" />
              <ColumnRule />
            </TrackColumn>
            <WaveColumn>
              <RangeBar />
              <Cursor><Stroke w={8} h={6} c="none" fill="#f4e800" d="M0 0H8V2L4.5 5H3.5L0 2Z" /></Cursor>
              <Lane $tone="#4d4d4d"><VoiceClip /></Lane>
              <Lane $tone="#3b3b3b"><MusicClip /></Lane>
              <Ruler><TimeRuler /></Ruler>
              <Cursor $foot><Stroke w={8} h={4} c="none" fill="#f4e800" d="M0 4H8L4 0Z" /></Cursor>
            </WaveColumn>
          </MainBody>
        </Panel>
      </Workspace>

      <Dock>
        <Panel $w={130}>
          <TabRow><PanelTab title="传送器" /><PanelCorner /></TabRow>
          <PanelBody>
            <ButtonGrid>
              {TRANSPORT.map(([name, d, dim]) => (
                <TransportButton key={name} $dim={dim} aria-label={name}><TransportGlyph name={name} d={d} /></TransportButton>
              ))}
            </ButtonGrid>
          </PanelBody>
        </Panel>
        <Panel $w={94}>
          <TabRow><PanelTab title="时间" /><PanelCorner /></TabRow>
          <PanelBody><BigTime>0:00.000</BigTime></PanelBody>
        </Panel>
        <Panel $w={111}>
          <TabRow><PanelTab title="缩放" /><PanelCorner /></TabRow>
          <PanelBody>
            <ZoomGrid>
              {['h+', 'h-', 'all', 'sel', 'left', 'right', 'v+', 'v-'].map(k => (
                <ZoomButton key={k} $ruled={k === 'v+'} aria-label={`缩放 ${k}`}><Magnifier kind={k} /></ZoomButton>
              ))}
            </ZoomGrid>
          </PanelBody>
        </Panel>
        <Panel $w={223}>
          <TabRow><PanelTab title="选择/查看" /><PanelCorner /></TabRow>
          <PanelBody>
            <TimeTable>
              <thead>
                <tr><td /><th scope="col">开始</th><th scope="col">结束</th><th scope="col">长度</th></tr>
              </thead>
              <tbody>
                <tr>
                  <th scope="row">选择</th>
                  <td><Field $w={57} $center aria-label="选择开始" defaultValue="0:00.000" /></td>
                  <td><Field $w={57} $center aria-label="选择结束" defaultValue="" /></td>
                  <td><Field $w={57} $center aria-label="选择长度" defaultValue="0:00.000" /></td>
                </tr>
                <tr>
                  <th scope="row">查看</th>
                  <td><Field $w={57} $center aria-label="查看开始" defaultValue="0:00.000" /></td>
                  <td><Field $w={57} $center aria-label="查看结束" defaultValue="3:15:00.000" /></td>
                  <td><Field $w={57} $center aria-label="查看长度" defaultValue="3:15:00.000" /></td>
                </tr>
              </tbody>
            </TimeTable>
          </PanelBody>
        </Panel>
        <Panel>
          <TabRow><PanelTab title="会话属性" /><Corner $w={7} /></TabRow>
          <PanelBody>
            <SessionGrid>
              <SessionLabel htmlFor="tempo">速度:</SessionLabel>
              <Inline><Field id="tempo" $w={38} defaultValue="120" />bpm</Inline>
              <Inline><Field $w={25} id="beats" defaultValue="4" /><label htmlFor="beats">小节/节拍</label></Inline>
              <PushButton>高级...</PushButton>
              <SessionLabel htmlFor="key">调:</SessionLabel>
              <Select id="key" label="调" value="(无)" w={43} />
              <Select label="拍号" value="4/4 拍" w={49} />
              <PushButton>节拍器</PushButton>
              <SessionLabel htmlFor="monitor">监听:</SessionLabel>
              <Select id="monitor" label="监听" value="外部" w={82} />
              <RadioLabel><Radio type="radio" name="input" disabled />智能输入</RadioLabel>
              <RadioLabel><Radio type="radio" name="input" disabled />总是导入</RadioLabel>
            </SessionGrid>
          </PanelBody>
        </Panel>
      </Dock>

      <LevelPanel>
        <TabRow><PanelTab title="电平" /><Corner $w={7} /></TabRow>
        <LevelBody />
      </LevelPanel>

      <SaveDialog />
    </Shell>
  );
}
